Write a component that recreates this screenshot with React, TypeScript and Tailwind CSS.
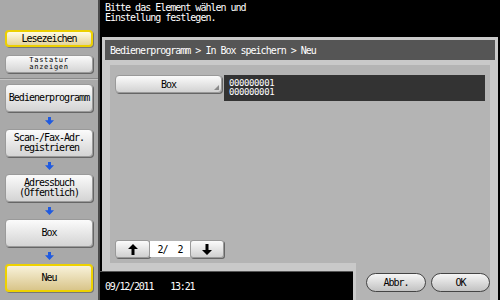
const mono = "font-['DejaVu_Sans_Mono',monospace] tracking-[-1px]";

function BlueArrow() {
  return (
    <div className="flex h-[17px] items-center justify-center">
      <svg width="9" height="8" viewBox="0 0 9 8">
        <path d="M3 0h3v3.2h3L4.5 8 0 3.2h3z" fill="#1f5ae0" />
      </svg>
    </div>
  );
}

function SideButton({ children, active }: { children: React.ReactNode; active?: boolean }) {
  return (
    <div
      className={
        active
          ? `flex h-[28px] items-center justify-center rounded-[4px] border-2 border-[#eed200] bg-linear-to-b from-[#f8f2da] to-[#d9c58a] text-[10px] leading-[10px] text-black shadow-[1px_1px_0_#777] ${mono}`
          : `flex h-[28px] items-center justify-center rounded-[4px] border border-[#9a9a9a] bg-linear-to-b from-[#fbfbfb] to-[#d4d4d4] text-center text-[10px] leading-[10px] text-black shadow-[1px_1px_0_#666] ${mono}`
      }
    >
      {children}
    </div>
  );
}

function Arrow({ up }: { up?: boolean }) {
  return (
    <svg width="10" height="11" viewBox="0 0 10 11" className={up ? "" : "rotate-180"}>
      <path d="M5 0L10 5H6.5V11H3.5V5H0Z" fill="#000" />
    </svg>
  );
}

export default function App() {
  return (
    <div className="flex h-[300px] w-[500px] overflow-hidden bg-black">
      {/* sidebar */}
      <div className="flex w-[98px] flex-col bg-[#a9a9a9] pt-[30px]">
        <div className="px-[5px]">
          <div
            className={`flex h-[17px] items-center justify-center rounded-[4px] border-2 border-[#ecd000] bg-linear-to-b from-[#fffbe4] to-[#e4d49a] text-[10px] leading-[10px] text-black shadow-[1px_1px_0_#777] ${mono}`}
          >
            Lesezeichen
          </div>
          <div className="mt-[8px] flex h-[18px] flex-col items-center justify-center rounded-[4px] border border-[#9a9a9a] bg-linear-to-b from-[#fbfbfb] to-[#d4d4d4] font-['DejaVu_Sans_Mono',monospace] text-[7px] leading-[7px] tracking-[0.7px] text-black shadow-[1px_1px_0_#666]">
            <span>Tastatur</span>
            <span>anzeigen</span>
          </div>
        </div>
        <div className="mt-[5px] h-px bg-[#8a8a8a]" />
        <div className="h-px bg-[#c4c4c4]" />
        <div className="mt-[4px] px-[5px]">
          <SideButton>Bedienerprogramm</SideButton>
          <BlueArrow />
          <SideButton>
            <span>
              Scan-/Fax-Adr.
              <br />
              registrieren
            </span>
          </SideButton>
          <BlueArrow />
          <SideButton>
            <span>
              Adressbuch
              <br />
              (Öffentlich)
            </span>
          </SideButton>
          <BlueArrow />
          <SideButton>Box</SideButton>
          <BlueArrow />
          <SideButton active>Neu</SideButton>
        </div>
      </div>
      <div className="w-[2px] bg-[#4a4a4a]" />

      {/* main */}
      <div className="flex w-[400px] flex-col">
        <div className={`h-[37px] pl-[5px] pt-[3px] text-[10px] leading-[10px] text-white ${mono}`}>
          Bitte das Element wählen und
          <br />
          Einstellung festlegen.
        </div>

        <div className="mx-[2px] flex flex-1 flex-col bg-[#c9c9c9] px-[3px] pt-[3px]">
          <div className={`flex h-[20px] items-center bg-[#555] pl-[5px] text-[10px] text-white ${mono}`}>
            Bedienerprogramm &gt; In Box speichern &gt; Neu
          </div>
          <div className="mx-[5px] mt-[5px] flex flex-1 flex-col justify-between bg-[#b4b4b4] pb-[5px] pl-[5px] pr-[5px] pt-[10px]">
            <div className="flex items-start gap-[2px]">
              <div
                className={`relative flex h-[18px] w-[107px] items-center justify-center rounded-[4px] border border-[#999] bg-linear-to-b from-[#fbfbfb] to-[#d2d2d2] text-[10px] text-black shadow-[1px_1px_0_#666] ${mono}`}
              >
                Box
                <svg width="5" height="5" viewBox="0 0 5 5" className="absolute bottom-[2px] right-[2px]">
                  <path d="M5 0V5H0Z" fill="#8a8a8a" />
                </svg>
              </div>
              <div className="flex h-[26px] flex-1 flex-col justify-center bg-[#333] pl-[5px] font-['DejaVu_Sans_Mono',monospace] text-[9px] leading-[9px] tracking-[-0.4px] text-white">
                <span>000000001</span>
                <span>000000001</span>
              </div>
            </div>

            <div className="flex items-center">
              <div className="flex h-[18px] w-[35px] items-center justify-center rounded-[3px] border border-[#999] bg-linear-to-b from-[#fbfbfb] to-[#d0d0d0] shadow-[1px_1px_0_#666]">
                <Arrow up />
              </div>
              <div className={`flex h-[16px] w-[40px] items-center justify-center whitespace-pre bg-white text-[10px] text-black ${mono}`}>
                {"2/  2"}
              </div>
              <div className="flex h-[18px] w-[34px] items-center justify-center rounded-[3px] border border-[#999] bg-linear-to-b from-[#fbfbfb] to-[#d0d0d0] shadow-[1px_1px_0_#666]">
                <Arrow />
              </div>
            </div>
          </div>
        </div>

        <div className="flex h-[37px]">
          <div className="flex w-[253px] flex-col">
            <div className="ml-[2px] h-[8px] bg-[#c9c9c9]" />
            <div className="h-px bg-[#555]" />
            <div className="flex flex-1 items-center gap-[17px] pl-[5px] font-['DejaVu_Sans_Mono',monospace] text-[10px] tracking-[-1.2px] text-white">
              <span>09/12/2011</span>
              <span>13:21</span>
            </div>
          </div>
          <div className="mr-[2px] flex flex-1 bg-[#c9c9c9] pl-[3px] pr-[8px]">
            <div className="flex flex-1 items-start justify-end gap-[5px] bg-[#b4b4b4] pt-[10px]">
              <div className={`flex h-[19px] w-[60px] items-center justify-center rounded-full border border-[#444] bg-linear-to-b from-[#f6f6f6] to-[#c2c2c2] text-[10px] text-black ${mono}`}>
                Abbr.
              </div>
              <div className={`flex h-[19px] w-[59px] items-center justify-center rounded-full border border-[#444] bg-linear-to-b from-[#f6f6f6] to-[#c2c2c2] text-[10px] text-black ${mono}`}>
                OK
              </div>
            </div>
          </div>
        </div>
      </div>
    </div>
  );
}
